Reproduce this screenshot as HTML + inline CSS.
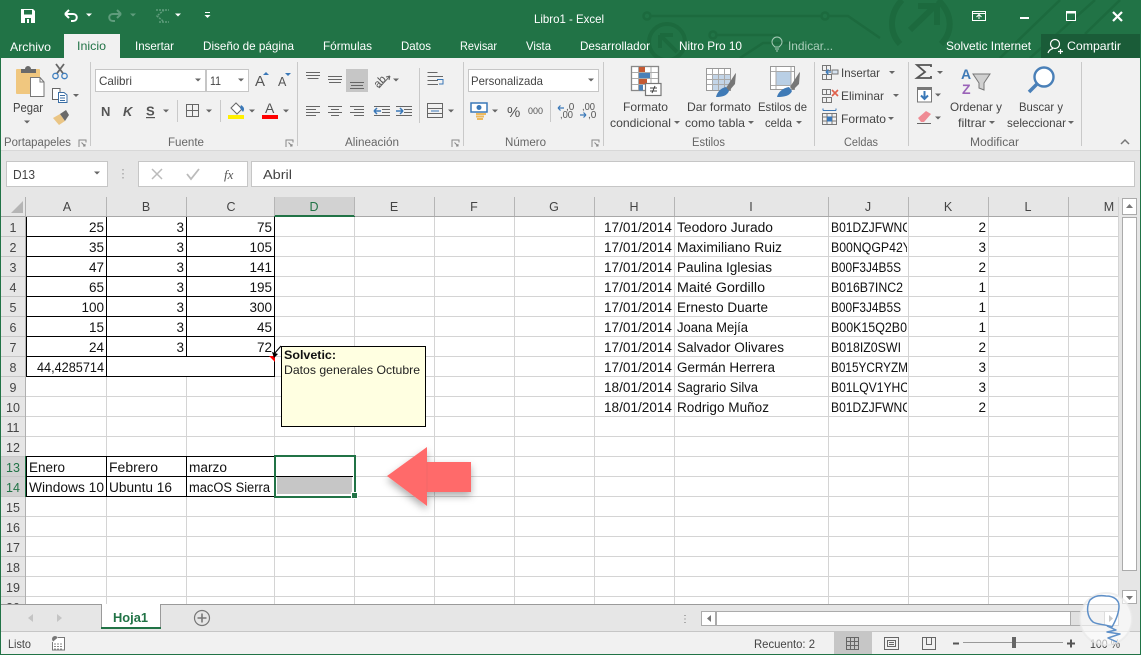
<!DOCTYPE html>
<html><head><meta charset="utf-8"><title>Libro1 - Excel</title>
<style>
html,body{margin:0;padding:0;background:#fff;overflow:hidden}
svg{display:block;font-family:"Liberation Sans",sans-serif}
.r{font-size:12px;fill:#444}
.w{font-size:12px;fill:#fff}
.g{font-size:11.5px;fill:#666}
.c{font-size:13.5px;fill:#111}
.e{font-size:13.5px;fill:#111;text-anchor:end}
.h{font-size:12.5px;fill:#444;text-anchor:middle}
.ic{fill:none;stroke:#666;stroke-width:1}
.bl{fill:none;stroke:#000;stroke-width:1}
</style></head><body>
<svg width="1141" height="655" viewBox="0 0 1141 655" xmlns="http://www.w3.org/2000/svg">
<defs>
<polygon id="t" points="-3,-1.5 3,-1.5 0,1.5" fill="#666"/>
<polygon id="tw" points="-3,-1.5 3,-1.5 0,1.5" fill="#fff"/>
<clipPath id="cj"><rect x="829" y="217" width="78" height="200"/></clipPath>
<clipPath id="cg"><rect x="0" y="197" width="1118" height="407"/></clipPath>
<clipPath id="ct"><rect x="600" y="0" width="541" height="58"/></clipPath>
<filter id="sh" x="-30%" y="-30%" width="160%" height="170%"><feDropShadow dx="0" dy="4" stdDeviation="4" flood-color="#000" flood-opacity=".32"/></filter>
<g id="launch"><path d="M-3.500,3.500V-3.500H3.500V-1M-1,-1L2.500,2.500M0.500,2.500H2.500V0.500" fill="none" stroke="#888" stroke-width="1"/></g>
</defs>

<!-- base -->
<rect width="1141" height="655" fill="#fff"/>
<rect width="1141" height="58" fill="#217346"/>

<!-- watermark -->
<g fill="none" stroke="#1c6a3e" stroke-width="2.500" clip-path="url(#ct)">
<circle cx="647" cy="16" r="3.500"/><path d="M651,16H821"/>
<circle cx="825" cy="16" r="3.500"/><path d="M829,16H848L880,38"/>
<circle cx="713" cy="35" r="3.500"/><path d="M717,35H780"/><path d="M740,58L763,43H800"/>
<circle cx="667" cy="42" r="18" stroke-width="4"/><path d="M660,35L677,52M660,35H673M660,35V48" stroke-width="4"/>
<path d="M902,0C889,14 889,32 900,44M938,0C953,14 953,32 941,44" stroke-width="6"/>
<path d="M910,30L936,5M918,6H937V25" stroke-width="6"/>
<path d="M1000,58L1060,0M1030,58L1095,0M1085,34L1120,0"/>
</g>

<!-- QAT -->
<path d="M21,9H33L35,11V23H21Z" fill="#fff"/><rect x="24" y="10" width="8" height="4.500" fill="#217346"/><rect x="25" y="18" width="6" height="5" fill="#217346"/><rect x="27" y="19" width="2" height="4" fill="#fff"/>
<path d="M65,14H73C78,14 78,21 73,21H71M65,14L69,10M65,14L69,18" fill="none" stroke="#fff" stroke-width="2"/>
<use href="#tw" x="89" y="15"/>
<path d="M121,14H113C108,14 108,21 113,21H115M121,14L117,10M121,14L117,18" fill="none" stroke="#5f9c7c" stroke-width="2"/>
<polygon points="130,13.500 136,13.500 133,16.500" fill="#5f9c7c"/>
<path d="M156,10H169M159,22H169M164,10L157,16L163,21" fill="none" stroke="#5f9c7c" stroke-width="1.500" stroke-dasharray="2 1"/>
<use href="#tw" x="178" y="15"/>
<rect x="205" y="12" width="5" height="1" fill="#fff"/><polygon points="204.500,15 210.500,15 207.500,18" fill="#fff"/>

<text x="534" y="23" class="w" textLength="70" lengthAdjust="spacingAndGlyphs">Libro1 - Excel</text>

<!-- window buttons -->
<path d="M972.500,11.500H985.500V20.500H972.500ZM972.500,13.500H985.500M979,19V15M976.500,17L979,14.500L981.500,17" fill="none" stroke="#fff"/>
<rect x="1020" y="17" width="9" height="2" fill="#fff"/>
<rect x="1066.500" y="11.500" width="9" height="9" fill="none" stroke="#fff"/><rect x="1066" y="11" width="10" height="2.500" fill="#fff"/>
<path d="M1113,12L1122,21M1122,12L1113,21" stroke="#fff" stroke-width="2.200"/>

<!-- tabs -->
<rect x="64" y="34" width="56" height="24" fill="#f1f1f1"/>
<text x="10" y="51" class="w" textLength="41" lengthAdjust="spacingAndGlyphs">Archivo</text>
<text x="77" y="50" class="w" style="fill:#217346" textLength="29" lengthAdjust="spacingAndGlyphs">Inicio</text>
<text x="135" y="50" class="w" textLength="39" lengthAdjust="spacingAndGlyphs">Insertar</text>
<text x="203" y="50" class="w" textLength="91" lengthAdjust="spacingAndGlyphs">Diseño de página</text>
<text x="323" y="50" class="w" textLength="49" lengthAdjust="spacingAndGlyphs">Fórmulas</text>
<text x="401" y="50" class="w" textLength="30" lengthAdjust="spacingAndGlyphs">Datos</text>
<text x="460" y="50" class="w" textLength="37" lengthAdjust="spacingAndGlyphs">Revisar</text>
<text x="526" y="50" class="w" textLength="25" lengthAdjust="spacingAndGlyphs">Vista</text>
<text x="580" y="50" class="w" textLength="70" lengthAdjust="spacingAndGlyphs">Desarrollador</text>
<text x="679" y="50" class="w" textLength="63" lengthAdjust="spacingAndGlyphs">Nitro Pro 10</text>
<path d="M775,47C773,45 772,44 772,42A5,5 0 0 1 782,42C782,44 781,45 779,47ZM775,49H779M776,51H778" fill="none" stroke="#a9cdb9" stroke-width="1"/>
<text x="788" y="50" class="w" style="fill:#a9cdb9" textLength="45" lengthAdjust="spacingAndGlyphs">Indicar...</text>
<text x="946" y="50" class="w" textLength="85" lengthAdjust="spacingAndGlyphs">Solvetic Internet</text>
<rect x="1041" y="34" width="99" height="24" fill="#1a5c38"/>
<circle cx="1055" cy="44" r="4.500" fill="none" stroke="#fff" stroke-width="1.200"/><path d="M1048,53C1049,50 1051,49 1053,48.500M1058,51.500H1063M1060.500,49V54" fill="none" stroke="#fff" stroke-width="1.200"/>
<text x="1067" y="50" class="w" textLength="54" lengthAdjust="spacingAndGlyphs">Compartir</text>

<!-- ribbon -->
<rect x="1" y="58" width="1139" height="92" fill="#f1f1f1"/>
<rect x="1" y="150" width="1139" height="1.500" fill="#d8d8d8"/>
<rect x="1" y="151" width="1139" height="46" fill="#e6e6e6"/>
<g fill="#c9c9c9">
<rect x="90" y="62" width="1" height="84"/><rect x="297" y="62" width="1" height="84"/><rect x="463" y="62" width="1" height="84"/><rect x="603" y="62" width="1" height="84"/><rect x="814" y="62" width="1" height="84"/><rect x="908" y="62" width="1" height="84"/><rect x="1081" y="62" width="1" height="84"/>
<rect x="419" y="68" width="1" height="55"/><rect x="177" y="100" width="1" height="22"/><rect x="220" y="100" width="1" height="22"/><rect x="550" y="100" width="1" height="22"/>
</g>
<text x="4" y="146" class="g" textLength="67" lengthAdjust="spacingAndGlyphs">Portapapeles</text>
<text x="168" y="146" class="g" textLength="36" lengthAdjust="spacingAndGlyphs">Fuente</text>
<text x="345" y="146" class="g" textLength="54" lengthAdjust="spacingAndGlyphs">Alineación</text>
<text x="505" y="146" class="g" textLength="41" lengthAdjust="spacingAndGlyphs">Número</text>
<text x="692" y="146" class="g" textLength="33" lengthAdjust="spacingAndGlyphs">Estilos</text>
<text x="844" y="146" class="g" textLength="34" lengthAdjust="spacingAndGlyphs">Celdas</text>
<text x="970" y="146" class="g" textLength="49" lengthAdjust="spacingAndGlyphs">Modificar</text>
<use href="#launch" x="82.500" y="143.500"/><use href="#launch" x="289.500" y="143.500"/><use href="#launch" x="455.500" y="143.500"/><use href="#launch" x="595.500" y="143.500"/>
<path d="M1121,144L1125,140L1129,144" fill="none" stroke="#777" stroke-width="1.500"/>

<!-- clipboard group -->
<rect x="16" y="69" width="24" height="25" rx="1" fill="#f0c77f"/>
<path d="M21,73V69H25A3,3 0 0 1 31,69H36V73Z" fill="#6a6a6a"/>
<path d="M30.500,77.500H40L44,82V96.500H30.500Z" fill="#fff" stroke="#777"/><path d="M40,77.500V82H44" fill="none" stroke="#777"/>
<text x="13" y="112" class="r" style="font-size:12.500px" textLength="30" lengthAdjust="spacingAndGlyphs">Pegar</text>
<use href="#t" x="27" y="122"/>
<path d="M56,64L63.500,74M64,64L56.500,74" stroke="#666" stroke-width="1.800" fill="none"/>
<circle cx="55.500" cy="76" r="2.700" fill="none" stroke="#3f7fbf" stroke-width="1.300"/><circle cx="64.500" cy="76" r="2.700" fill="none" stroke="#3f7fbf" stroke-width="1.300"/>
<path d="M52.500,88.500H60V99.500H52.500Z" fill="#fff" stroke="#666"/><path d="M58.500,92.500H64L67,95V102.500H58.500Z" fill="#fff" stroke="#3a6ea5"/><path d="M60,95.500H65M60,98H65M60,100.500H65" stroke="#3a6ea5"/>
<use href="#t" x="76" y="95.500"/>
<path d="M53,118L60,114L65,121L59,125Z" fill="#eac585"/><path d="M60,114L66,110L69,115L65,121Z" fill="#6a6a6a"/>

<!-- font group -->
<rect x="95.500" y="69.500" width="110" height="22" fill="#fff" stroke="#c6c6c6"/>
<rect x="206.500" y="69.500" width="42" height="22" fill="#fff" stroke="#c6c6c6"/>
<text x="99" y="85" class="r" textLength="33" lengthAdjust="spacingAndGlyphs">Calibri</text>
<text x="210" y="85" class="r" textLength="11" lengthAdjust="spacingAndGlyphs">11</text>
<use href="#t" x="198" y="80"/><use href="#t" x="241" y="80"/>
<text x="255" y="86" style="font-size:15px;fill:#555">A</text><polygon points="263,75 269,75 266,72" fill="#3a78b8"/>
<text x="278" y="86" style="font-size:12.500px;fill:#555">A</text><polygon points="285,73 291,73 288,76" fill="#3a78b8"/>
<text x="101" y="116" style="font-size:13px;font-weight:bold;fill:#555">N</text>
<text x="123" y="116" style="font-size:13px;font-weight:bold;font-style:italic;fill:#555">K</text>
<text x="146" y="115.500" style="font-size:13px;font-weight:bold;fill:#555">S</text><rect x="146" y="117" width="9" height="1.200" fill="#555"/>
<use href="#t" x="166" y="111"/>
<path d="M186.500,104.500H198.500V116.500H186.500ZM192.500,104.500V116.500M186.500,110.500H198.500" fill="none" stroke="#666"/>
<use href="#t" x="209" y="111"/>
<path d="M231,108L236,103L242,109L237,114Z" fill="#fff" stroke="#666"/><path d="M241,105C244,107 245,109 243,112L240,108Z" fill="#3a78b8"/>
<rect x="228" y="115" width="16" height="4" fill="#ffef00"/>
<use href="#t" x="252" y="111"/>
<text x="265" y="113" style="font-size:14px;fill:#555">A</text>
<rect x="262" y="115" width="16" height="4" fill="#f00"/>
<use href="#t" x="286" y="111"/>

<!-- alignment group -->
<rect x="346" y="69" width="22" height="23" fill="#c6c6c6"/>
<g stroke="#666" fill="none">
<path d="M306,72.500H320M306,75.500H320M307.500,78.500H318.500"/>
<path d="M328,76.500H342M328,79.500H342M329,82.500H341"/>
<path d="M350,82.500H364M351,85.500H363M350,88.500H364"/>
<path d="M306,106.500H320M306,109.500H316M306,112.500H320M306,115.500H316"/>
<path d="M328,106.500H342M331,109.500H339M328,112.500H342M331,115.500H339"/>
<path d="M350,106.500H364M354,109.500H364M350,112.500H364M354,115.500H364"/>
<path d="M374,106.500H390M382,109.500H390M382,112.500H390M374,115.500H390"/>
<path d="M396,106.500H412M404,109.500H412M404,112.500H412M396,115.500H412"/>
<path d="M427.500,72.500H437.500M427.500,76.500H443M427.500,80.500H438M427.500,84.500H438" />
<path d="M427.500,103.500H442.500V117.500H427.500ZM427.500,108.500H442.500M427.500,113.500H442.500"/>
</g>
<path d="M437,79.500H443V84H439" fill="none" stroke="#3a78b8"/>
<path d="M431,111H439" stroke="#3a78b8"/>
<text x="374" y="85" transform="rotate(-45 380 82)" style="font-size:11px;fill:#555">ab</text>
<path d="M379,88L390,76M390,76L386,77M390,76L389,80" stroke="#666" fill="none"/>
<use href="#t" x="396" y="80"/><use href="#t" x="451" y="111"/>
<path d="M374,111H381M374,111L377,108M374,111L377,114" fill="none" stroke="#3a78b8" stroke-width="1.500"/>
<path d="M403,111H396M403,111L400,108M403,111L400,114" fill="none" stroke="#3a78b8" stroke-width="1.500"/>

<!-- number group -->
<rect x="468.500" y="69.500" width="130" height="22" fill="#fff" stroke="#c6c6c6"/>
<text x="471" y="85" class="r" textLength="72" lengthAdjust="spacingAndGlyphs">Personalizada</text>
<use href="#t" x="591" y="80"/>
<rect x="471" y="103" width="16" height="9" fill="#fff" stroke="#3a78b8" stroke-width="1.500"/><circle cx="479" cy="107.500" r="2.500" fill="#3a78b8"/>
<path d="M476,114H486M476,116.500H484M477,119H483" stroke="#edb95e" stroke-width="2"/>
<use href="#t" x="495" y="111"/>
<text x="507" y="117" style="font-size:15px;fill:#555">%</text>
<text x="528" y="114" style="font-size:9.500px;fill:#555" textLength="15" lengthAdjust="spacingAndGlyphs">000</text>
<text x="566" y="110" style="font-size:10px;fill:#555">,0</text><text x="560" y="118" style="font-size:10px;fill:#555" textLength="13" lengthAdjust="spacingAndGlyphs">,00</text>
<path d="M558,108H564M558,108L560.500,105.500M558,108L560.500,110.500" fill="none" stroke="#3a78b8" stroke-width="1.200"/>
<text x="582" y="110" style="font-size:10px;fill:#555" textLength="13" lengthAdjust="spacingAndGlyphs">,00</text><text x="588" y="118" style="font-size:10px;fill:#555">,0</text>
<path d="M580,115H586M586,115L583.500,112.500M586,115L583.500,117.500" fill="none" stroke="#3a78b8" stroke-width="1.200"/>

<!-- styles group -->
<rect x="631.500" y="66.500" width="27" height="24" fill="#fff" stroke="#888" stroke-width="1.300"/>
<rect x="639" y="67" width="6" height="5.500" fill="#c55a33"/><rect x="639" y="73" width="11" height="5.500" fill="#4a80b8"/><rect x="639" y="79" width="8" height="5.500" fill="#c55a33"/><rect x="639" y="85" width="4" height="5.500" fill="#4a80b8"/>
<path d="M638.500,67V90M651,67V84M632,72.500H658M632,78.500H658M632,84.500H645" stroke="#aaa" fill="none"/>
<rect x="645.500" y="83.500" width="15.500" height="12" fill="#fff" stroke="#777" stroke-width="1.200"/>
<path d="M650,88H657M650,91H657M655,86L652,93" stroke="#444" fill="none"/>
<text x="623" y="111" class="r" textLength="45" lengthAdjust="spacingAndGlyphs">Formato</text>
<text x="610" y="127" class="r" textLength="61" lengthAdjust="spacingAndGlyphs">condicional</text><use href="#t" x="677" y="122.500"/>
<rect x="706.500" y="68.500" width="24" height="22" fill="#fff" stroke="#999"/>
<rect x="713" y="74" width="17" height="16" fill="#c3d5e8"/>
<path d="M712.500,69V90M718.500,69V90M724.500,69V90M707,74.500H730M707,79.500H730M707,84.500H730" stroke="#aaa"/>
<path d="M726,88L735,74L736,73L735,84L729,91Z" fill="#777"/>
<path d="M716,97C717,92 721,88 726,87L729,91C727,96 722,97 716,97Z" fill="#3f7ab6"/>
<text x="687" y="111" class="r" textLength="64" lengthAdjust="spacingAndGlyphs">Dar formato</text>
<text x="685" y="127" class="r" textLength="60" lengthAdjust="spacingAndGlyphs">como tabla</text><use href="#t" x="751" y="122.500"/>
<rect x="770.500" y="66.500" width="24" height="23" fill="#fff" stroke="#999"/>
<rect x="776" y="72" width="15" height="13" fill="#b9cfe5"/>
<path d="M771,71.500H794M776,67V89M791,67V89M771,85.500H794" stroke="#aaa" fill="none"/>
<path d="M790,87L799,73L800,72L799,84L793,90Z" fill="#777"/>
<path d="M777,97C778,92 783,88 789,87L792,91C790,96 784,97 777,97Z" fill="#3f7ab6"/>
<text x="758" y="111" class="r" textLength="49" lengthAdjust="spacingAndGlyphs">Estilos de</text>
<text x="765" y="127" class="r" textLength="27" lengthAdjust="spacingAndGlyphs">celda</text><use href="#t" x="799" y="122.500"/>

<!-- cells group -->
<g fill="none" stroke="#777">
<path d="M822.500,65.500H830.500V70.500H822.500ZM826.500,65.500V70.500M822.500,74.500H831.500V79.500H822.500ZM826.500,74.500V79.500"/>
<path d="M822.500,89.500H830.500V94.500H822.500ZM826.500,89.500V94.500M822.500,97.500H831.500V102.500H822.500ZM826.500,97.500V102.500"/>
<rect x="822.500" y="113.500" width="14" height="11"/><path d="M822.500,117H836.500M822.500,121H836.500M827,113.500V124.500M832,113.500V124.500"/>
</g>
<rect x="832" y="70" width="6" height="4" fill="#d6e3f0" stroke="#777"/>
<path d="M826,72H831M826,72L828.500,69.500M826,72L828.500,74.500" stroke="#3a78b8" fill="none" stroke-width="1.300"/>
<path d="M832,90L838,96M838,90L832,96" stroke="#e0604a" stroke-width="1.600"/>
<path d="M823,110.500H836M823,110.500V108.500M836,110.500V108.500" stroke="#3a78b8"/><rect x="827" y="116.500" width="5" height="5" fill="#3a78b8"/>
<text x="841" y="77" class="r" textLength="39" lengthAdjust="spacingAndGlyphs">Insertar</text><use href="#t" x="892" y="72.500"/>
<text x="841" y="100" class="r" textLength="43" lengthAdjust="spacingAndGlyphs">Eliminar</text><use href="#t" x="896" y="95.500"/>
<text x="841" y="123" class="r" textLength="45" lengthAdjust="spacingAndGlyphs">Formato</text><use href="#t" x="891" y="118.500"/>

<!-- editing group -->
<path d="M931,67V65H917L925,72L917,78H931V76" fill="none" stroke="#555" stroke-width="1.800"/>
<use href="#t" x="940" y="72.500"/>
<rect x="917.500" y="87.500" width="14" height="14.500" fill="#fff" stroke="#777"/><rect x="917" y="87" width="15" height="3" fill="#777"/>
<path d="M924.500,91V99M921,95.500L924.500,99L928,95.500" fill="none" stroke="#3a78b8" stroke-width="2"/>
<use href="#t" x="938" y="95"/>
<path d="M918,118L926,111L931,114L924,122H921Z" fill="#ef8b94"/><rect x="917" y="123" width="14" height="1" fill="#666"/>
<use href="#t" x="938" y="118"/>
<text x="961" y="79" style="font-size:14px;font-weight:bold;fill:#3f7ab6">A</text>
<text x="962" y="94" style="font-size:14px;font-weight:bold;fill:#9a63b8">Z</text>
<path d="M973,74H990L984,83V90L979,88V83Z" fill="#d0d0d0" stroke="#777"/>
<text x="950" y="111" class="r" textLength="52" lengthAdjust="spacingAndGlyphs">Ordenar y</text>
<text x="958" y="127" class="r" textLength="28" lengthAdjust="spacingAndGlyphs">filtrar</text><use href="#t" x="992" y="122.500"/>
<circle cx="1044" cy="77" r="9.500" fill="#fff" stroke="#4a80b8" stroke-width="2.400"/>
<path d="M1037,84L1029,92" stroke="#4a80b8" stroke-width="3.500"/>
<text x="1019" y="111" class="r" textLength="44" lengthAdjust="spacingAndGlyphs">Buscar y</text>
<text x="1007" y="127" class="r" textLength="59" lengthAdjust="spacingAndGlyphs">seleccionar</text><use href="#t" x="1071" y="122.500"/>

<!-- formula bar -->
<rect x="6.500" y="161.500" width="101" height="25" fill="#fff" stroke="#c6c6c6"/>
<text x="13" y="179" class="r" style="font-size:13px" textLength="22" lengthAdjust="spacingAndGlyphs">D13</text>
<use href="#t" x="97" y="173"/>
<path d="M123,169V170.500M123,173V174.500M123,177V178.500" stroke="#aaa" stroke-width="1.500"/>
<rect x="138.500" y="161.500" width="109" height="25" fill="#fff" stroke="#c6c6c6"/>
<path d="M152,169L162,179M162,169L152,179" stroke="#bbb" stroke-width="1.500"/>
<path d="M187,174L191,179L199,169" stroke="#bbb" stroke-width="1.800" fill="none"/>
<text x="224" y="179" style="font-family:'Liberation Serif',serif;font-style:italic;font-size:13px;fill:#555">fx</text>
<rect x="251.500" y="161.500" width="883" height="25" fill="#fff" stroke="#c6c6c6"/>
<text x="263" y="179" class="r" style="font-size:13px" textLength="29" lengthAdjust="spacingAndGlyphs">Abril</text>

<!-- sheet area -->
<rect x="1" y="197" width="1118" height="20" fill="#e6e6e6"/>
<rect x="1" y="217" width="25" height="387" fill="#e6e6e6"/>
<rect x="274" y="197" width="81" height="20" fill="#d2d2d2"/>
<rect x="1" y="457" width="25" height="40" fill="#d2d2d2"/>
<polygon points="23,201 23,213 11,213" fill="#b5b5b5"/>
<rect x="1" y="216" width="1118" height="1" fill="#a8a8a8"/>
<rect x="274" y="215" width="81" height="2" fill="#217346"/>
<rect x="25" y="197" width="1" height="407" fill="#b0b0b0"/>
<rect x="25" y="456" width="2" height="41" fill="#217346"/>
<path d="M106.500,197V216M186.500,197V216M274.500,197V216M354.500,197V216M434.500,197V216M514.500,197V216M594.500,197V216M674.500,197V216M828.500,197V216M908.500,197V216M988.500,197V216M1068.500,197V216" stroke="#b5b5b5"/>
<g stroke="#d4d4d4">
<path d="M106.500,217V604M186.500,217V604M274.500,217V604M354.500,217V604M434.500,217V604M514.500,217V604M594.500,217V604M674.500,217V604M828.500,217V604M908.500,217V604M988.500,217V604M1068.500,217V604M1118.500,197V604"/>
<path d="M26,236.500H1118M26,256.500H1118M26,276.500H1118M26,296.500H1118M26,316.500H1118M26,336.500H1118M26,356.500H1118M26,376.500H1118M26,396.500H1118M26,416.500H1118M26,436.500H1118M26,456.500H1118M26,476.500H1118M26,496.500H1118M26,516.500H1118M26,536.500H1118M26,556.500H1118M26,576.500H1118M26,596.500H1118"/>
</g>
<path d="M1,236.500H25M1,256.500H25M1,276.500H25M1,296.500H25M1,316.500H25M1,336.500H25M1,356.500H25M1,376.500H25M1,396.500H25M1,416.500H25M1,436.500H25M1,456.500H25M1,476.500H25M1,496.500H25M1,516.500H25M1,536.500H25M1,556.500H25M1,576.500H25M1,596.500H25" stroke="#c6c6c6"/>
<g>
<text x="67" y="211" class="h">A</text><text x="146" y="211" class="h">B</text><text x="231" y="211" class="h">C</text><text x="314" y="211" class="h" style="fill:#217346">D</text><text x="394" y="211" class="h">E</text><text x="474" y="211" class="h">F</text><text x="554" y="211" class="h">G</text><text x="634" y="211" class="h">H</text><text x="751" y="211" class="h">I</text><text x="868" y="211" class="h">J</text><text x="948" y="211" class="h">K</text><text x="1028" y="211" class="h">L</text><text x="1109" y="211" class="h">M</text>
</g>
<g clip-path="url(#cg)">
<text x="13" y="232" class="h">1</text><text x="13" y="252" class="h">2</text><text x="13" y="272" class="h">3</text><text x="13" y="292" class="h">4</text><text x="13" y="312" class="h">5</text><text x="13" y="332" class="h">6</text><text x="13" y="352" class="h">7</text><text x="13" y="372" class="h">8</text><text x="13" y="392" class="h">9</text><text x="13" y="412" class="h">10</text><text x="13" y="432" class="h">11</text><text x="13" y="452" class="h">12</text><text x="13" y="472" class="h" style="fill:#217346">13</text><text x="13" y="492" class="h" style="fill:#217346">14</text><text x="13" y="512" class="h">15</text><text x="13" y="532" class="h">16</text><text x="13" y="552" class="h">17</text><text x="13" y="572" class="h">18</text><text x="13" y="592" class="h">19</text><text x="13" y="612" class="h">20</text>
</g>

<!-- merged B8:C8 -->
<rect x="107" y="357" width="167" height="19" fill="#fff"/>

<!-- black borders -->
<path class="bl" d="M26.500,217V376.500M106.500,217V376.500M186.500,217V356.500M274.500,217V376.500M26,236.500H275M26,256.500H275M26,276.500H275M26,296.500H275M26,316.500H275M26,336.500H275M26,356.500H275M26,376.500H275"/>
<path class="bl" d="M26.500,456.500V496.500M106.500,456.500V496.500M186.500,456.500V496.500M274.500,456.500V496.500M26,456.500H275M26,476.500H275M26,496.500H275"/>

<!-- left data -->
<g>
<text x="104" y="232" class="e">25</text><text x="184" y="232" class="e">3</text><text x="272" y="232" class="e">75</text>
<text x="104" y="252" class="e">35</text><text x="184" y="252" class="e">3</text><text x="272" y="252" class="e">105</text>
<text x="104" y="272" class="e">47</text><text x="184" y="272" class="e">3</text><text x="272" y="272" class="e">141</text>
<text x="104" y="292" class="e">65</text><text x="184" y="292" class="e">3</text><text x="272" y="292" class="e">195</text>
<text x="104" y="312" class="e">100</text><text x="184" y="312" class="e">3</text><text x="272" y="312" class="e">300</text>
<text x="104" y="332" class="e">15</text><text x="184" y="332" class="e">3</text><text x="272" y="332" class="e">45</text>
<text x="104" y="352" class="e">24</text><text x="184" y="352" class="e">3</text><text x="272" y="352" class="e">72</text>
<text x="37" y="372" class="c" textLength="67" lengthAdjust="spacingAndGlyphs">44,4285714</text>
<text x="29" y="472" class="c" textLength="36" lengthAdjust="spacingAndGlyphs">Enero</text>
<text x="109" y="472" class="c" textLength="49" lengthAdjust="spacingAndGlyphs">Febrero</text>
<text x="189" y="472" class="c" textLength="38" lengthAdjust="spacingAndGlyphs">marzo</text>
<text x="29" y="492" class="c" textLength="75" lengthAdjust="spacingAndGlyphs">Windows 10</text>
<text x="109" y="492" class="c" textLength="63" lengthAdjust="spacingAndGlyphs">Ubuntu 16</text>
<text x="189" y="492" class="c" textLength="81" lengthAdjust="spacingAndGlyphs">macOS Sierra</text>
</g>

<!-- right data -->
<g>
<text x="604" y="232" class="c" textLength="68" lengthAdjust="spacingAndGlyphs">17/01/2014</text><text x="604" y="252" class="c" textLength="68" lengthAdjust="spacingAndGlyphs">17/01/2014</text><text x="604" y="272" class="c" textLength="68" lengthAdjust="spacingAndGlyphs">17/01/2014</text><text x="604" y="292" class="c" textLength="68" lengthAdjust="spacingAndGlyphs">17/01/2014</text><text x="604" y="312" class="c" textLength="68" lengthAdjust="spacingAndGlyphs">17/01/2014</text><text x="604" y="332" class="c" textLength="68" lengthAdjust="spacingAndGlyphs">17/01/2014</text><text x="604" y="352" class="c" textLength="68" lengthAdjust="spacingAndGlyphs">17/01/2014</text><text x="604" y="372" class="c" textLength="68" lengthAdjust="spacingAndGlyphs">17/01/2014</text><text x="604" y="392" class="c" textLength="68" lengthAdjust="spacingAndGlyphs">18/01/2014</text><text x="604" y="412" class="c" textLength="68" lengthAdjust="spacingAndGlyphs">18/01/2014</text>
<text x="677" y="232" class="c" textLength="96" lengthAdjust="spacingAndGlyphs">Teodoro Jurado</text>
<text x="677" y="252" class="c" textLength="105" lengthAdjust="spacingAndGlyphs">Maximiliano Ruiz</text>
<text x="677" y="272" class="c" textLength="95" lengthAdjust="spacingAndGlyphs">Paulina Iglesias</text>
<text x="677" y="292" class="c" textLength="88" lengthAdjust="spacingAndGlyphs">Maité Gordillo</text>
<text x="677" y="312" class="c" textLength="91" lengthAdjust="spacingAndGlyphs">Ernesto Duarte</text>
<text x="677" y="332" class="c" textLength="71" lengthAdjust="spacingAndGlyphs">Joana Mejía</text>
<text x="677" y="352" class="c" textLength="107" lengthAdjust="spacingAndGlyphs">Salvador Olivares</text>
<text x="677" y="372" class="c" textLength="98" lengthAdjust="spacingAndGlyphs">Germán Herrera</text>
<text x="677" y="392" class="c" textLength="81" lengthAdjust="spacingAndGlyphs">Sagrario Silva</text>
<text x="677" y="412" class="c" textLength="92" lengthAdjust="spacingAndGlyphs">Rodrigo Muñoz</text>
<g clip-path="url(#cj)">
<text x="831" y="232" class="c" textLength="80" lengthAdjust="spacingAndGlyphs">B01DZJFWNC</text>
<text x="831" y="252" class="c" textLength="80" lengthAdjust="spacingAndGlyphs">B00NQGP42Y</text>
<text x="831" y="272" class="c" textLength="70" lengthAdjust="spacingAndGlyphs">B00F3J4B5S</text>
<text x="831" y="292" class="c" textLength="72" lengthAdjust="spacingAndGlyphs">B016B7INC2</text>
<text x="831" y="312" class="c" textLength="70" lengthAdjust="spacingAndGlyphs">B00F3J4B5S</text>
<text x="831" y="332" class="c" textLength="76" lengthAdjust="spacingAndGlyphs">B00K15Q2B0</text>
<text x="831" y="352" class="c" textLength="70" lengthAdjust="spacingAndGlyphs">B018IZ0SWI</text>
<text x="831" y="372" class="c" textLength="77" lengthAdjust="spacingAndGlyphs">B015YCRYZM</text>
<text x="831" y="392" class="c" textLength="78" lengthAdjust="spacingAndGlyphs">B01LQV1YHC</text>
<text x="831" y="412" class="c" textLength="80" lengthAdjust="spacingAndGlyphs">B01DZJFWNC</text>
</g>
<text x="986" y="232" class="e">2</text><text x="986" y="252" class="e">3</text><text x="986" y="272" class="e">2</text><text x="986" y="292" class="e">1</text><text x="986" y="312" class="e">1</text><text x="986" y="332" class="e">1</text><text x="986" y="352" class="e">2</text><text x="986" y="372" class="e">3</text><text x="986" y="392" class="e">3</text><text x="986" y="412" class="e">2</text>
</g>

<!-- comment -->
<polygon points="269,356 275,356 275,362" fill="#f00"/>
<path d="M281,346L274,354" stroke="#000"/><polygon points="272,352 278,354 274,358" fill="#000"/>
<rect x="281.500" y="346.500" width="144" height="80" fill="#ffffe1" stroke="#000"/>
<text x="284" y="359" style="font-size:12px;font-weight:bold;fill:#111" textLength="52" lengthAdjust="spacingAndGlyphs">Solvetic:</text>
<text x="284" y="374" style="font-size:12px;fill:#222" textLength="136" lengthAdjust="spacingAndGlyphs">Datos generales Octubre</text>

<!-- selection -->
<rect x="275" y="457" width="79" height="39" fill="#fff"/>
<rect x="277" y="477" width="75" height="17" fill="#c6c6c6"/>
<rect x="276" y="476" width="77" height="1" fill="#000"/>
<rect x="275" y="456" width="80" height="41" fill="none" stroke="#217346" stroke-width="2"/>
<rect x="351" y="492" width="7" height="7" fill="#fff"/>
<rect x="352" y="493" width="5" height="5" fill="#217346"/>

<!-- arrow -->
<polygon points="387,476 427,447 427,462 471,462 471,492 427,492 427,506" fill="#ff6a6a" filter="url(#sh)"/>
<rect x="426.500" y="462" width="1" height="30" fill="#f06868"/>

<!-- vertical scrollbar -->
<rect x="1119" y="197" width="21" height="407" fill="#e6e6e6"/>
<rect x="1122.500" y="198.500" width="14" height="16" fill="#fff" stroke="#ababab"/>
<polygon points="1126,208 1133,208 1129.500,204" fill="#777"/>
<rect x="1122.500" y="217.500" width="14" height="353" fill="#fff" stroke="#ababab"/>
<rect x="1122.500" y="590.500" width="14" height="13" fill="#fff" stroke="#ababab"/>
<polygon points="1126,596 1133,596 1129.500,600" fill="#777"/>

<!-- sheet tabs bar -->
<rect x="1" y="604" width="1139" height="28" fill="#e6e6e6"/>
<rect x="1" y="604" width="1118" height="1" fill="#9a9a9a"/>
<rect x="101" y="604" width="60" height="25" fill="#fff"/>
<rect x="101" y="604" width="1" height="25" fill="#9a9a9a"/><rect x="160" y="604" width="1" height="25" fill="#9a9a9a"/>
<rect x="101" y="627" width="60" height="2" fill="#217346"/>
<text x="113" y="622" style="font-size:13px;font-weight:bold;fill:#217346" textLength="35" lengthAdjust="spacingAndGlyphs">Hoja1</text>
<polygon points="33,614 33,622 28,618" fill="#c4c4c4"/><polygon points="57,614 57,622 62,618" fill="#c4c4c4"/>
<circle cx="202" cy="618" r="7.500" fill="none" stroke="#777" stroke-width="1.200"/>
<path d="M202,613.500V622.500M197.500,618H206.500" stroke="#777" stroke-width="1.600"/>
<path d="M685,615V616M685,618.500V619.500M685,622V623" stroke="#aaa" stroke-width="2"/>
<rect x="701.500" y="611.500" width="417" height="14" fill="#e0e0e0" stroke="#ababab"/>
<rect x="701.500" y="611.500" width="14" height="14" fill="#fff" stroke="#ababab"/>
<rect x="716.500" y="611.500" width="354" height="14" fill="#fff" stroke="#ababab"/>
<rect x="1104.500" y="611.500" width="14" height="14" fill="#fff" stroke="#ababab"/>
<polygon points="711,615 711,622 707,618.500" fill="#777"/>
<polygon points="1109,615 1109,622 1113,618.500" fill="#777"/>

<!-- status bar -->
<rect x="1" y="632" width="1139" height="22" fill="#f1f1f1"/>
<rect x="1" y="631" width="1139" height="1" fill="#c6c6c6"/>
<text x="8" y="648" class="r" textLength="23" lengthAdjust="spacingAndGlyphs">Listo</text>
<circle cx="55" cy="639" r="3" fill="#777"/>
<path d="M58,637.500H64.500V650H52.500V642" fill="#fff" stroke="#777"/>
<path d="M54,644H63M54,646.500H63M54,649H63" stroke="#888" stroke-dasharray="2 1"/>
<text x="754" y="648" class="r" textLength="61" lengthAdjust="spacingAndGlyphs">Recuento: 2</text>
<rect x="834" y="632" width="38" height="22" fill="#c6c6c6"/>
<path d="M846.500,637.500H858.500V649.500H846.500ZM850.500,637.500V649.500M854.500,637.500V649.500M846.500,641.500H858.500M846.500,645.500H858.500" fill="none" stroke="#666"/>
<path d="M884.500,637.500H898.500V649.500H884.500ZM887.500,640.500H895.500V646.500H887.500ZM889,642.500H894M889,644.500H894" fill="none" stroke="#666"/>
<path d="M922.500,637.500H935.500V649.500H922.500ZM926.500,637.500V644.500H931.500V637.500" fill="none" stroke="#666"/>
<rect x="953" y="642.500" width="6" height="2" fill="#555"/>
<rect x="963" y="642" width="100" height="1" fill="#999"/>
<rect x="1012" y="637" width="4" height="11" fill="#666"/>
<path d="M1067,643.500H1075M1071,639.500V647.500" stroke="#555" stroke-width="2"/>
<text x="1090" y="648" class="r" textLength="30" lengthAdjust="spacingAndGlyphs">100 %</text>

<!-- frame -->
<rect x="0" y="58" width="1" height="597" fill="#217346"/>
<rect x="1140" y="58" width="1" height="597" fill="#217346"/>
<rect x="0" y="654" width="1141" height="1" fill="#217346"/>

<!-- logo watermark -->
<circle cx="1106" cy="619" r="26" fill="#fff" fill-opacity=".6" stroke="#e8e8e8" stroke-opacity=".7" stroke-width="2"/>
<path d="M1090,600C1094,596 1100,595 1106,596C1114,596 1119,600 1119,606C1119,613 1116,620 1112,627C1105,624 1098,625 1093,622C1087,617 1086,607 1090,600ZM1107,626L1116,630L1107,632L1120,634L1108,638L1117,642" fill="none" stroke="#5f90c8" stroke-width="1.500" stroke-linejoin="round"/>
</svg>
</body></html>
